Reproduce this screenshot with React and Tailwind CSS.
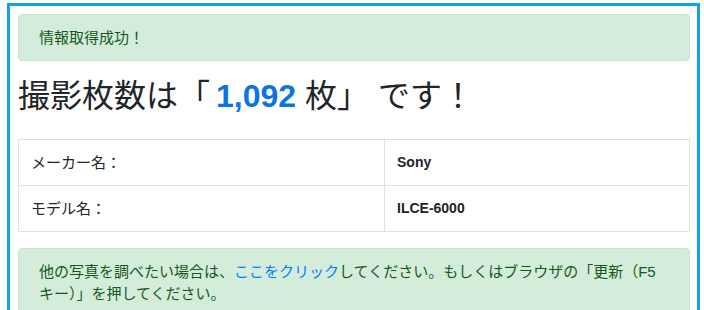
import React from 'react';

const rows = [
  { label: 'メーカー名：', value: 'Sony' },
  { label: 'モデル名：', value: 'ILCE-6000' },
];

const App = () => {
  const count = '1,092';

  return (
    <div className="bg-white min-h-[310px] pt-[3px] pl-[7px] font-['Liberation_Sans','Noto_Sans_CJK_JP',sans-serif] text-[#212529]">
      <div className="w-[693px] min-h-[320px] border-[3px] border-b-0 border-[#12a2e6] pt-2 pl-2 pr-[7px]">
        {/* success message */}
        <div className="mb-4 rounded border border-[#c3e6cb] bg-[#d4edda] px-5 py-3 text-[15px] leading-[21px] text-[#155724]">
          情報取得成功！
        </div>

        <h1 className="mb-6 text-[32px] leading-[38px] font-normal">
          撮影枚数は「<span className="ml-[6px] font-bold text-[#0a74e0]">{count}</span> 枚」 です！
        </h1>

        <table className="w-full table-fixed border-collapse border border-[#dee2e6] text-[15px] leading-[21px]">
          <colgroup>
            <col className="w-[366px]" />
            <col />
          </colgroup>
          <tbody>
            {rows.map(row => (
              <tr key={row.label}>
                <td className="border border-[#dee2e6] px-3 py-3 align-top">{row.label}</td>
                <td className="border border-[#dee2e6] px-3 py-3 align-top font-bold text-[14px]">{row.value}</td>
              </tr>
            ))}
          </tbody>
        </table>

        <div className="mt-4 rounded border border-[#c3e6cb] bg-[#d4edda] px-5 py-3 text-[15px] leading-[22px] text-[#155724]">
          他の写真を調べたい場合は、
          <a href="#" className="text-[#007bff]">ここをクリック</a>
          してください。もしくはブラウザの「更新（F5キー）」を押してください。
        </div>
      </div>
    </div>
  );
};

export default App;
